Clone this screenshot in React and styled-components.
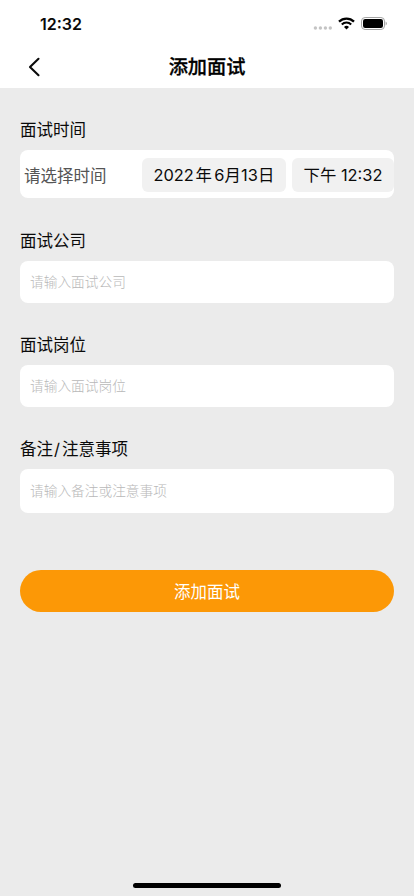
import styled, { createGlobalStyle } from 'styled-components';

const GlobalStyle = createGlobalStyle`
  * {
    box-sizing: border-box;
  }
  body {
    margin: 0;
    background: #ebebeb;
    font-family: Inter, 'Noto Sans CJK SC', sans-serif;
    color: #0a0a0a;
  }
`;

const Screen = styled.div`
  display: flex;
  flex-direction: column;
  width: 414px;
  height: 896px;
  background: #ebebeb;
  overflow: hidden;
`;

const Header = styled.header`
  height: 88px;
  background: #fff;
`;

const StatusBar = styled.div`
  display: flex;
  align-items: center;
  justify-content: space-between;
  height: 48px;
  padding: 0 27px 0 40px;
`;

const Clock = styled.span`
  font-size: 16px;
  font-weight: 600;
  line-height: 20px;
`;

const StatusIcons = styled.div`
  display: flex;
  align-items: center;
  gap: 6px;
  height: 14px;
  margin-bottom: 1px;
`;

const NavBar = styled.div`
  display: grid;
  grid-template-columns: 60px 1fr 60px;
  align-items: center;
  height: 38px;
`;

const BackButton = styled.button`
  display: flex;
  padding: 0 0 0 28px;
  border: 0;
  background: none;
`;

const Title = styled.h1`
  margin: 0;
  font-size: 19.2px;
  font-weight: 500;
  line-height: 24px;
  text-align: center;
  color: #000;
  -webkit-text-stroke: 0.3px #000;
`;

const Form = styled.form`
  display: flex;
  flex: 1;
  flex-direction: column;
  padding: 32px 20px 0;
`;

const Field = styled.div`
  display: flex;
  flex-direction: column;
  gap: 10px;
  margin-bottom: ${props => props.$gap || 32}px;
`;

const Label = styled.label`
  font-size: 16.5px;
  line-height: 20px;
`;

const Slash = styled.span`
  margin: 0 2px 0 1px;
`;

const TimeRow = styled.div`
  display: flex;
  align-items: center;
  height: 48px;
  padding: 2px 0 0 4px;
  border-radius: 8px;
  background: #fff;
  overflow: hidden;
`;

const TimeHint = styled.span`
  flex: 1;
  padding-top: 1px;
  font-size: 16.5px;
  line-height: 20px;
  color: #555;
`;

const Chip = styled.span`
  display: flex;
  align-items: center;
  justify-content: center;
  gap: ${props => props.$gap}px;
  width: ${props => props.$width}px;
  height: 34px;
  margin-left: ${props => props.$offset || 0}px;
  border-radius: 6px;
  background: #f1f1f1;
  font-size: 16.4px;
  line-height: 20px;
  white-space: nowrap;
`;

const DatePart = styled.span`
  margin-right: ${props => props.$space || 0}px;
`;

const Input = styled.input`
  width: 100%;
  height: ${props => props.$height || 42}px;
  padding: 0 10px;
  border: 0;
  border-radius: 8px;
  outline: 0;
  background: #fff;
  font-family: inherit;
  font-size: 13.7px;
  &::placeholder {
    color: #b8b8b8;
    font-weight: 300;
    opacity: 1;
  }
`;

const SubmitButton = styled.button`
  height: 42px;
  padding: 2px 0 0;
  border: 0;
  border-radius: 21px;
  background: #fc9806;
  color: #fff;
  font-family: inherit;
  font-size: 16.5px;
  line-height: 20px;
`;

const HomeIndicator = styled.div`
  width: 148px;
  height: 5px;
  margin: 0 auto 8px;
  border-radius: 3px;
  background: #000;
`;

const SignalIcon = () => (
  <svg width="19" height="14" viewBox="0 0 19 14" fill="#c4c4c4">
    <circle cx="2.4" cy="11" r="1.7" />
    <circle cx="7.4" cy="11" r="1.7" />
    <circle cx="12.4" cy="11" r="1.7" />
    <circle cx="17.3" cy="11" r="1.7" />
  </svg>
);

const WifiIcon = () => (
  <svg width="17" height="13" viewBox="0 0 17 13" fill="none" stroke="#000">
    <path d="M1 4.6a10.8 10.8 0 0 1 15 0" strokeWidth="2.3" />
    <path d="M3.8 7.5a6.7 6.7 0 0 1 9.4 0" strokeWidth="2.1" />
    <path d="M8.5 12.4 6 9.9a3.6 3.6 0 0 1 5 0Z" fill="#000" stroke="none" />
  </svg>
);

const BatteryIcon = () => (
  <svg width="26" height="13" viewBox="0 0 26 13">
    <rect x="0.5" y="0.5" width="23" height="12" rx="3.6" fill="none" stroke="#a3a3a3" />
    <rect x="2" y="2" width="20" height="9" rx="2.2" fill="#000" />
    <path d="M24.6 4.6v3.8a2.1 2.1 0 0 0 0-3.8Z" fill="#a3a3a3" />
  </svg>
);

const BackIcon = () => (
  <svg width="12" height="20" viewBox="0 0 12 20" fill="none" stroke="#0a0a0a" strokeWidth="2.1">
    <path d="M10.5 1.8 2 10l8.5 8.2" strokeLinecap="round" strokeLinejoin="round" />
  </svg>
);

const fields = [
  { id: 'company', label: '面试公司', placeholder: '请输入面试公司' },
  { id: 'position', label: '面试岗位', placeholder: '请输入面试岗位' },
  {
    id: 'remark',
    label: (
      <>
        备注<Slash>/</Slash>注意事项
      </>
    ),
    placeholder: '请输入备注或注意事项',
    height: 44,
    gap: 57,
  },
];

const dateParts = [
  { text: '2022', space: 1.5 },
  { text: '年', space: 2 },
  { text: '6' },
  { text: '月' },
  { text: '13' },
  { text: '日' },
];

const App = () => (
  <>
    <GlobalStyle />
    <Screen>
      <Header>
        <StatusBar>
          <Clock>12:32</Clock>
          <StatusIcons>
            <SignalIcon />
            <WifiIcon />
            <BatteryIcon />
          </StatusIcons>
        </StatusBar>
        <NavBar>
          <BackButton type="button" aria-label="返回">
            <BackIcon />
          </BackButton>
          <Title>添加面试</Title>
        </NavBar>
      </Header>
      <Form>
        <Field $gap={33}>
          <Label>面试时间</Label>
          <TimeRow>
            <TimeHint>请选择时间</TimeHint>
            <Chip $width={144} $gap={0.2}>
              {dateParts.map(({ text, space }) => (
                <DatePart key={text} $space={space}>
                  {text}
                </DatePart>
              ))}
            </Chip>
            <Chip $width={102} $offset={6}>
              下午 12:32
            </Chip>
          </TimeRow>
        </Field>
        {fields.map(({ id, label, placeholder, height, gap }) => (
          <Field key={id} $gap={gap}>
            <Label htmlFor={id}>{label}</Label>
            <Input id={id} placeholder={placeholder} $height={height} />
          </Field>
        ))}
        <SubmitButton type="button">添加面试</SubmitButton>
      </Form>
      <HomeIndicator />
    </Screen>
  </>
);

export default App;
